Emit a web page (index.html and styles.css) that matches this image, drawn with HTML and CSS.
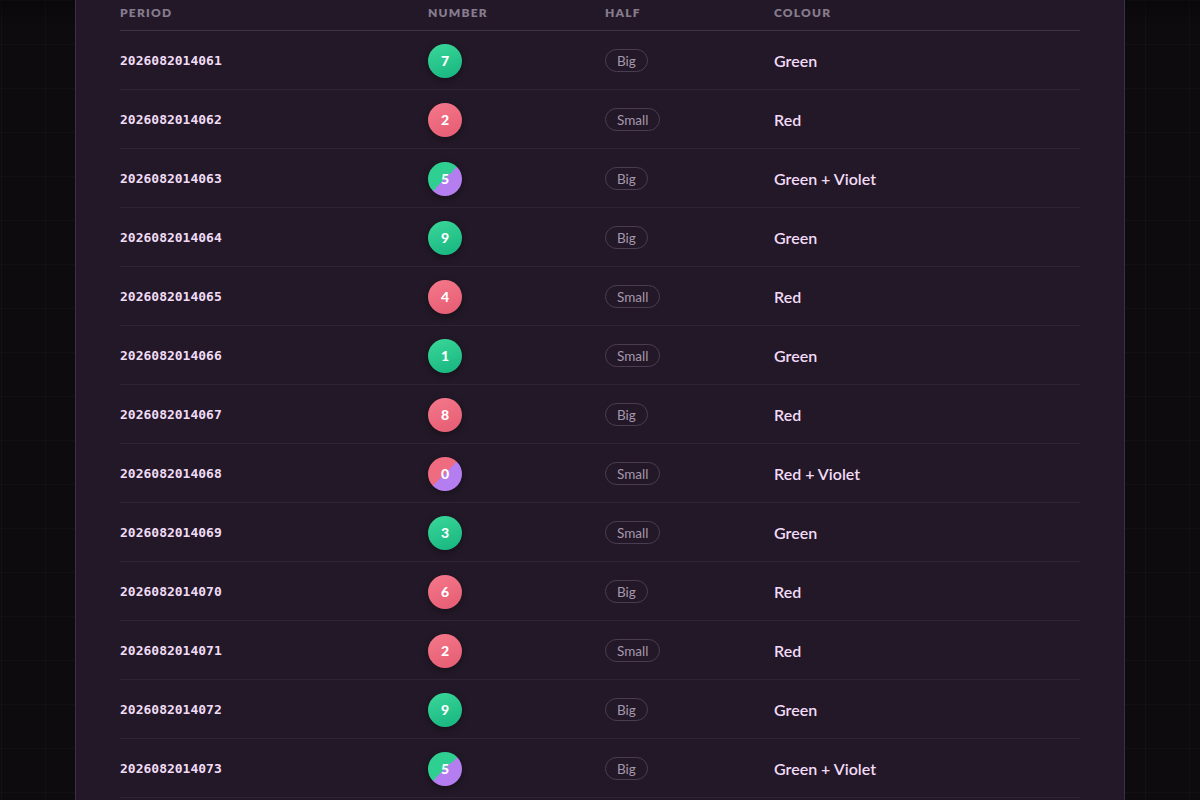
FILE: index.html
```html
<!DOCTYPE html>
<html lang="en">
<head>
<meta charset="utf-8">
<title>Results</title>
<link rel="stylesheet" href="styles.css">
</head>
<body>
<main class="panel">
  <table class="results">
    <colgroup>
      <col class="c-period"><col class="c-number"><col class="c-half"><col class="c-colour">
    </colgroup>
    <thead>
      <tr><th>Period</th><th>Number</th><th>Half</th><th>Colour</th></tr>
    </thead>
    <tbody>
      <tr><td class="period">2026082014061</td><td><span class="ball green">7</span></td><td><span class="pill">Big</span></td><td class="colour">Green</td></tr>
      <tr><td class="period">2026082014062</td><td><span class="ball red">2</span></td><td><span class="pill">Small</span></td><td class="colour">Red</td></tr>
      <tr><td class="period">2026082014063</td><td><span class="ball green-violet">5</span></td><td><span class="pill">Big</span></td><td class="colour">Green + Violet</td></tr>
      <tr><td class="period">2026082014064</td><td><span class="ball green">9</span></td><td><span class="pill">Big</span></td><td class="colour">Green</td></tr>
      <tr><td class="period">2026082014065</td><td><span class="ball red">4</span></td><td><span class="pill">Small</span></td><td class="colour">Red</td></tr>
      <tr><td class="period">2026082014066</td><td><span class="ball green">1</span></td><td><span class="pill">Small</span></td><td class="colour">Green</td></tr>
      <tr><td class="period">2026082014067</td><td><span class="ball red">8</span></td><td><span class="pill">Big</span></td><td class="colour">Red</td></tr>
      <tr><td class="period">2026082014068</td><td><span class="ball red-violet">0</span></td><td><span class="pill">Small</span></td><td class="colour">Red + Violet</td></tr>
      <tr><td class="period">2026082014069</td><td><span class="ball green">3</span></td><td><span class="pill">Small</span></td><td class="colour">Green</td></tr>
      <tr><td class="period">2026082014070</td><td><span class="ball red">6</span></td><td><span class="pill">Big</span></td><td class="colour">Red</td></tr>
      <tr><td class="period">2026082014071</td><td><span class="ball red">2</span></td><td><span class="pill">Small</span></td><td class="colour">Red</td></tr>
      <tr><td class="period">2026082014072</td><td><span class="ball green">9</span></td><td><span class="pill">Big</span></td><td class="colour">Green</td></tr>
      <tr><td class="period">2026082014073</td><td><span class="ball green-violet">5</span></td><td><span class="pill">Big</span></td><td class="colour">Green + Violet</td></tr>
    </tbody>
  </table>
</main>
</body>
</html>
```
FILE: styles.css
```css
* { box-sizing: border-box; }

html, body {
  margin: 0;
  height: 100%;
  overflow: hidden;
}

body {
  background-color: #0e0b0f;
  background-image:
    linear-gradient(to bottom, rgba(0,0,0,0.35), rgba(0,0,0,0) 30px),
    repeating-linear-gradient(to right, rgba(255,255,255,0.025) 0 1px, transparent 1px 44px),
    repeating-linear-gradient(to bottom, rgba(255,255,255,0.025) 0 1px, transparent 1px 44px);
  background-position: 0 0, 1px 0, 0 0;
  font-family: "Lato", "Noto Sans", sans-serif;
  color: #f1dcf6;
}

.panel {
  width: 1050px;
  margin: 0 auto;
  min-height: 100%;
  background: #221827;
  border-left: 1px solid #3b3142;
  border-right: 1px solid #3b3142;
  padding: 0 44px;
}

.results {
  width: 100%;
  border-collapse: collapse;
  table-layout: fixed;
}

.c-period { width: 308px; }
.c-number { width: 177px; }
.c-half { width: 169px; }

.results th {
  height: 30px;
  padding: 0 0 4px;
  text-align: left;
  vertical-align: middle;
  font-size: 12px;
  font-weight: 800;
  letter-spacing: 0.1em;
  text-transform: uppercase;
  color: #877b8e;
  border-bottom: 1px solid #3d3344;
}

.results td {
  height: 59px;
  padding: 2px 0 0;
  vertical-align: middle;
  border-bottom: 1px solid #2e2434;
}

.period {
  font-family: "DejaVu Sans Mono", monospace;
  font-weight: 700;
  font-size: 13px;
  color: #f1dcf6;
}

.ball {
  display: flex;
  align-items: center;
  justify-content: center;
  width: 34px;
  height: 34px;
  border-radius: 50%;
  color: #fff;
  font-weight: 900;
  font-size: 14px;
  box-shadow: 0 2px 6px rgba(0,0,0,0.35);
}

.ball.green { background: linear-gradient(160deg, #3bd79a, #16b57f); }
.ball.red { background: linear-gradient(160deg, #f5788a, #e55c72); }
.ball.green-violet { background: linear-gradient(135deg, #2fcf92 50%, #b57ef0 50%); }
.ball.red-violet { background: linear-gradient(135deg, #ee6b80 50%, #b57ef0 50%); }

.pill {
  display: inline-flex;
  align-items: center;
  height: 23px;
  padding: 0 11px;
  border: 1px solid #4a3d52;
  border-radius: 999px;
  font-size: 13.5px;
  color: #a797ad;
}

.colour {
  font-size: 16px;
  font-weight: 600;
  color: #f3dbf8;
}
```
